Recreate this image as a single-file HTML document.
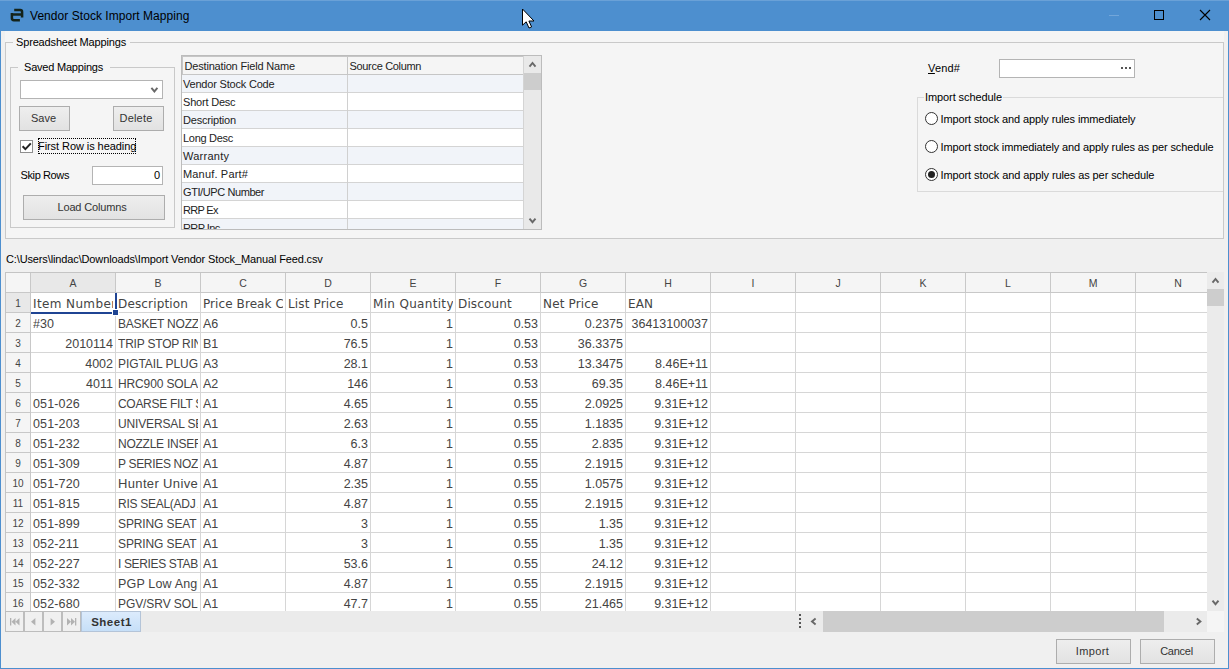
<!DOCTYPE html>
<html lang="en"><head><meta charset="utf-8"><title>Vendor Stock Import Mapping</title>
<style>
*{box-sizing:border-box;margin:0;padding:0}
html,body{width:1229px;height:669px;overflow:hidden;background:#f0f0f0}
body{font-family:"Liberation Sans","DejaVu Sans",sans-serif;font-size:11px;color:#000}
#win{position:absolute;left:0;top:0;width:1229px;height:669px;background:#f0f0f0;overflow:hidden}
#win>div,#win>span,#win>svg{position:absolute}
.abs{position:absolute}
/* title bar */
#title{left:0;top:0;width:1229px;height:31px;background:#4d8fcf}
#title .hl{position:absolute;left:0;top:0;width:1229px;height:1px;background:#6aa1d7}
#ttext{position:absolute;left:30px;top:9px;font-size:12px;line-height:15px;white-space:nowrap;color:#000}
#bl{left:0;top:31px;width:1px;height:638px;background:#4d8fcf}
#br{left:1228px;top:31px;width:1px;height:638px;background:#4d8fcf}
#bb{left:0;top:668px;width:1229px;height:1px;background:#4d8fcf}
/* panel */
#panel{left:5px;top:31px;width:1219px;height:208px;background:#f5f5f5}
.gb{border:1px solid #c9c9c9}
.gbl{background:#f5f5f5;white-space:nowrap;line-height:13px;font-size:11px}
.t{white-space:nowrap;line-height:13px;font-size:11px}
.btn{border:1px solid #adadad;background:#e6e6e6;background:linear-gradient(#eeeeee,#e2e2e2);text-align:center;font-size:11px;color:#333;white-space:nowrap}
.inp{border:1px solid #b4b4b4;background:#fff}
/* mapping table */
#map{left:181px;top:55px;width:361px;height:175px;border:1px solid #bcbcbc;background:#fff;overflow:hidden}
#map div{position:absolute}
#map .hd{background:#f5f5f5;border:1px solid #c6c6c6;height:19px;top:0;line-height:18px;padding-left:1.5px;white-space:nowrap;color:#222}
#map .rw{left:0;width:341px;height:18px;border-bottom:1px solid #d4d4d4}
#map .rw.a{background:#f1f4f9}
#map .rw span{position:absolute;left:1px;top:1px;line-height:17px;white-space:nowrap;color:#222;letter-spacing:-0.2px}
#map .vl{left:165px;top:19px;width:1px;height:160px;background:#d0d0d0}
#map .sb{left:341px;top:0;width:18px;height:173px;background:#e9e9e9;border-left:1px solid #d4d4d4}
#map .th{left:342px;top:17px;width:17px;height:17px;background:#cdcdcd}
/* sheet */
#sheet{left:5px;top:272px;width:1202px;height:339px;border-left:1px solid #c4c4c4;border-top:1px solid #c4c4c4;background:#fff;overflow:hidden}
#sheet div{position:absolute}
#sheet .corner{left:0;top:0;width:25px;height:20px;background:#f5f5f5;border-right:1px solid #c8c8c8;border-bottom:1px solid #c8c8c8}
#sheet .ch{top:0;width:85px;height:20px;background:#f5f5f5;border-right:1px solid #c8c8c8;border-bottom:1px solid #c8c8c8;text-align:center;font-size:10.5px;line-height:20px;color:#444;padding-top:0}
#sheet .rh{left:0;width:25px;height:20px;background:#f5f5f5;border-right:1px solid #c8c8c8;border-bottom:1px solid #c8c8c8;text-align:center;font-size:10px;line-height:20px;color:#444;padding-top:1px}
#sheet .sel{background:#e8e8e8}
#sheet .c{width:85px;height:20px;border-right:1px solid #d6d6d6;border-bottom:1px solid #d6d6d6;font-size:12.5px;color:#444;line-height:19px;white-space:nowrap;overflow:hidden}
#sheet .c span{position:absolute;left:2px;top:2px;width:80px;height:19px;overflow:hidden;display:block;white-space:nowrap}
#sheet .c.r span{text-align:right;direction:ltr}
#sheet .c.hd span{font-family:"DejaVu Sans","Liberation Sans",sans-serif;font-size:12px;letter-spacing:0.15px;top:2px}
#sheet .selr{left:109px;top:20px;width:2px;height:16px;background:#1f4493}
#sheet .selb{left:25px;top:39px;width:82px;height:2px;background:#1f4493}
#sheet .selh{left:107px;top:37px;width:5px;height:5px;background:#1f4493;box-shadow:0 0 0 1px #fff}
/* v scrollbar */
#vsb{left:1207px;top:272px;width:17px;height:339px;background:#ebebeb}
#vth{left:1207px;top:289px;width:17px;height:17px;background:#cdcdcd}
/* tab bar */
#tabbar{left:5px;top:611px;width:1202px;height:21px;background:#ebebeb}
.nav{top:611px;width:19px;height:21px;border:1px solid #bdbdbd;background:#f0f0f0}
#tab{left:81px;top:611px;width:60px;height:21px;border:1px solid #b4c4d8;background:linear-gradient(#dcebfc,#c6dff8);text-align:center;font-weight:bold;font-size:11.5px;letter-spacing:0.5px;line-height:21px;color:#333;padding-left:1px}
#hth{left:823px;top:611px;width:341px;height:21px;background:#cdcdcd}
#corner{left:1207px;top:611px;width:17px;height:21px;background:#f5f5f5}

</style></head>
<body>
<div id="win">
<div id="title"><div class="hl"></div>
<svg class="abs" style="left:10px;top:8px" width="16" height="16" viewBox="0 0 16 16"><path d="M4.2 1.9 H10.2 Q12.1 1.9 12.1 3.9 V9.5 M0.7 6.4 H12.1 M1.9 5 V10.3 Q1.9 12.2 3.9 12.2 H9.9" fill="none" stroke="#14231a" stroke-width="2.5"/></svg>
<span id="ttext" style="letter-spacing:0.05px">Vendor Stock Import Mapping</span>
<svg class="abs" style="left:520px;top:7px" width="16" height="23" viewBox="0 0 16 23"><path d="M2.5 2 V18.2 L6.2 14.8 L9 21 L11.6 19.9 L8.9 14 H14 Z" fill="#fff" stroke="#000" stroke-width="1" stroke-linejoin="miter"/></svg>
<div class="abs" style="left:1109px;top:15px;width:10px;height:1px;background:#72a6da"></div>
<div class="abs" style="left:1154px;top:10px;width:10px;height:10px;border:1px solid #000"></div>
<svg class="abs" style="left:1199px;top:9px" width="12" height="12" viewBox="0 0 12 12"><path d="M1 1 L11 11 M11 1 L1 11" stroke="#000" stroke-width="1.1" fill="none"/></svg>
</div>
<div id="bl"></div><div id="br"></div><div id="bb"></div>
<div id="panel"></div>

<!-- Spreadsheet Mappings group -->
<div class="gb" style="left:5px;top:42px;width:1219px;height:197px"></div>
<span class="gbl" style="left:13px;top:36px;padding:0 4px 0 3px;letter-spacing:-0.155px">Spreadsheet Mappings</span>

<!-- Saved Mappings group -->
<div class="gb" style="left:10px;top:67px;width:165px;height:161px"></div>
<span class="gbl" style="left:18px;top:61px;padding:0 7px 0 6px;letter-spacing:-0.21px">Saved Mappings</span>
<div class="inp" style="left:20px;top:80px;width:143px;height:19px"></div>
<svg style="left:149px;top:85px" width="11" height="9" viewBox="0 0 11 9"><path d="M2.4 2.8 L5.4 6.4 L8.4 2.8" fill="none" stroke="#686868" stroke-width="1.9"/></svg>
<div class="btn" style="left:19px;top:106px;width:51px;height:25px;line-height:22px;letter-spacing:0;padding-right:2px">Save</div>
<div class="btn" style="left:113px;top:106px;width:51px;height:25px;line-height:22px;letter-spacing:0.2px;padding-right:5px">Delete</div>
<div class="inp" style="left:20px;top:140px;width:13px;height:13px;border-color:#8e8e8e"></div>
<svg style="left:21px;top:141px" width="11" height="11" viewBox="0 0 11 11"><path d="M1.6 5.2 L4.4 8.1 L9.8 2.4" fill="none" stroke="#222" stroke-width="2"/></svg>
<div style="left:38px;top:138px;width:98px;height:16px;border:1px dotted #000"></div>
<span class="t" style="left:38px;top:140px;letter-spacing:-0.07px">First Row is heading</span>
<span class="t" style="left:20.5px;top:169px;letter-spacing:-0.38px">Skip Rows</span>
<div class="inp" style="left:92px;top:166px;width:71px;height:19px;text-align:right;padding-right:2px;line-height:17px">0</div>
<div class="btn" style="left:23px;top:195px;width:142px;height:25px;line-height:22px;letter-spacing:-0.16px;padding-right:4px">Load Columns</div>

<!-- mapping table -->
<div id="map">
<div class="hd" style="left:0;width:166px;letter-spacing:-0.18px">Destination Field Name</div>
<div class="hd" style="left:165px;width:177px;letter-spacing:-0.32px">Source Column</div>
<div class="rw a" style="top:19px"><span>Vendor Stock Code</span></div>
<div class="rw" style="top:37px"><span>Short Desc</span></div>
<div class="rw a" style="top:55px"><span>Description</span></div>
<div class="rw" style="top:73px"><span style="letter-spacing:-0.3px">Long Desc</span></div>
<div class="rw a" style="top:91px"><span style="letter-spacing:0.25px">Warranty</span></div>
<div class="rw" style="top:109px"><span style="letter-spacing:0.17px">Manuf. Part#</span></div>
<div class="rw a" style="top:127px"><span style="letter-spacing:-0.41px">GTI/UPC Number</span></div>
<div class="rw" style="top:145px"><span style="letter-spacing:-0.7px">RRP Ex</span></div>
<div class="rw a" style="top:163px"><span style="letter-spacing:-0.6px">RRP Inc</span></div>
<div class="vl"></div>
<div class="sb"></div><div class="th"></div>
<svg class="abs" style="left:345px;top:4px" width="11" height="9" viewBox="0 0 11 9"><path d="M2.5 6.6 L5.5 3 L8.5 6.6" fill="none" stroke="#686868" stroke-width="1.9"/></svg>
<svg class="abs" style="left:345px;top:160px" width="11" height="9" viewBox="0 0 11 9"><path d="M2.5 2.6 L5.5 6.2 L8.5 2.6" fill="none" stroke="#686868" stroke-width="1.9"/></svg>
</div>

<!-- Vend# -->
<span class="t" style="left:928px;top:62px;letter-spacing:0.16px"><u>V</u>end#</span>
<div class="inp" style="left:999px;top:59px;width:136px;height:19px"></div>
<div style="left:1121px;top:67px;width:2px;height:2px;background:#555"></div>
<div style="left:1125px;top:67px;width:2px;height:2px;background:#555"></div>
<div style="left:1129px;top:67px;width:2px;height:2px;background:#555"></div>

<!-- Import schedule -->
<div class="gb" style="left:917px;top:97px;width:320px;height:95px;clip-path:inset(0 14px 0 0);border-color:#dadada"></div>
<span class="gbl" style="left:924px;top:91px;padding:0 1px;letter-spacing:-0.09px">Import schedule</span>
<div style="left:925px;top:112px;width:13px;height:13px;border:1px solid #333;border-radius:50%;background:#fff"></div>
<span class="t" style="left:940.5px;top:113px;letter-spacing:-0.11px">Import stock and apply rules immediately</span>
<div style="left:925px;top:140px;width:13px;height:13px;border:1px solid #333;border-radius:50%;background:#fff"></div>
<span class="t" style="left:940.5px;top:141px;letter-spacing:-0.125px">Import stock immediately and apply rules as per schedule</span>
<div style="left:925px;top:168px;width:13px;height:13px;border:1px solid #333;border-radius:50%;background:#fff"></div>
<div style="left:928px;top:171px;width:7px;height:7px;border-radius:50%;background:#222"></div>
<span class="t" style="left:940.5px;top:169px;letter-spacing:-0.1px">Import stock and apply rules as per schedule</span>

<span class="t" style="left:6px;top:253px;letter-spacing:-0.13px">C:\Users\lindac\Downloads\Import Vendor Stock_Manual Feed.csv</span>
<div id="sheet">
<div class="corner"></div>
<div class="ch sel" style="left:25px">A</div>
<div class="ch" style="left:110px">B</div>
<div class="ch" style="left:195px">C</div>
<div class="ch" style="left:280px">D</div>
<div class="ch" style="left:365px">E</div>
<div class="ch" style="left:450px">F</div>
<div class="ch" style="left:535px">G</div>
<div class="ch" style="left:620px">H</div>
<div class="ch" style="left:705px">I</div>
<div class="ch" style="left:790px">J</div>
<div class="ch" style="left:875px">K</div>
<div class="ch" style="left:960px">L</div>
<div class="ch" style="left:1045px">M</div>
<div class="ch" style="left:1130px">N</div>
<div class="rh sel" style="top:20px">1</div>
<div class="c hd" style="left:25px;top:20px"><span style="letter-spacing:0.38px">Item Number</span></div>
<div class="c hd" style="left:110px;top:20px"><span>Description</span></div>
<div class="c hd" style="left:195px;top:20px"><span style="letter-spacing:0.08px">Price Break Code</span></div>
<div class="c hd" style="left:280px;top:20px"><span>List Price</span></div>
<div class="c hd" style="left:365px;top:20px"><span style="letter-spacing:0.32px">Min Quantity</span></div>
<div class="c hd" style="left:450px;top:20px"><span>Discount</span></div>
<div class="c hd" style="left:535px;top:20px"><span>Net Price</span></div>
<div class="c hd" style="left:620px;top:20px"><span>EAN</span></div>
<div class="c hd" style="left:705px;top:20px"><span></span></div>
<div class="c hd" style="left:790px;top:20px"><span></span></div>
<div class="c hd" style="left:875px;top:20px"><span></span></div>
<div class="c hd" style="left:960px;top:20px"><span></span></div>
<div class="c hd" style="left:1045px;top:20px"><span></span></div>
<div class="c hd" style="left:1130px;top:20px"><span></span></div>
<div class="rh" style="top:40px">2</div>
<div class="c" style="left:25px;top:40px"><span>#30</span></div>
<div class="c" style="left:110px;top:40px"><span style="font-size:12px;letter-spacing:-0.2px">BASKET NOZZLE</span></div>
<div class="c" style="left:195px;top:40px"><span>A6</span></div>
<div class="c r" style="left:280px;top:40px"><span>0.5</span></div>
<div class="c r" style="left:365px;top:40px"><span>1</span></div>
<div class="c r" style="left:450px;top:40px"><span>0.53</span></div>
<div class="c r" style="left:535px;top:40px"><span>0.2375</span></div>
<div class="c r" style="left:620px;top:40px"><span>36413100037</span></div>
<div class="c" style="left:705px;top:40px"><span></span></div>
<div class="c" style="left:790px;top:40px"><span></span></div>
<div class="c" style="left:875px;top:40px"><span></span></div>
<div class="c" style="left:960px;top:40px"><span></span></div>
<div class="c" style="left:1045px;top:40px"><span></span></div>
<div class="c" style="left:1130px;top:40px"><span></span></div>
<div class="rh" style="top:60px">3</div>
<div class="c r" style="left:25px;top:60px"><span>2010114</span></div>
<div class="c" style="left:110px;top:60px"><span style="font-size:12px;letter-spacing:-0.2px">TRIP STOP RING</span></div>
<div class="c" style="left:195px;top:60px"><span>B1</span></div>
<div class="c r" style="left:280px;top:60px"><span>76.5</span></div>
<div class="c r" style="left:365px;top:60px"><span>1</span></div>
<div class="c r" style="left:450px;top:60px"><span>0.53</span></div>
<div class="c r" style="left:535px;top:60px"><span>36.3375</span></div>
<div class="c r" style="left:620px;top:60px"><span></span></div>
<div class="c" style="left:705px;top:60px"><span></span></div>
<div class="c" style="left:790px;top:60px"><span></span></div>
<div class="c" style="left:875px;top:60px"><span></span></div>
<div class="c" style="left:960px;top:60px"><span></span></div>
<div class="c" style="left:1045px;top:60px"><span></span></div>
<div class="c" style="left:1130px;top:60px"><span></span></div>
<div class="rh" style="top:80px">4</div>
<div class="c r" style="left:25px;top:80px"><span>4002</span></div>
<div class="c" style="left:110px;top:80px"><span style="font-size:12px;letter-spacing:-0.06px">PIGTAIL PLUG</span></div>
<div class="c" style="left:195px;top:80px"><span>A3</span></div>
<div class="c r" style="left:280px;top:80px"><span>28.1</span></div>
<div class="c r" style="left:365px;top:80px"><span>1</span></div>
<div class="c r" style="left:450px;top:80px"><span>0.53</span></div>
<div class="c r" style="left:535px;top:80px"><span>13.3475</span></div>
<div class="c r" style="left:620px;top:80px"><span>8.46E+11</span></div>
<div class="c" style="left:705px;top:80px"><span></span></div>
<div class="c" style="left:790px;top:80px"><span></span></div>
<div class="c" style="left:875px;top:80px"><span></span></div>
<div class="c" style="left:960px;top:80px"><span></span></div>
<div class="c" style="left:1045px;top:80px"><span></span></div>
<div class="c" style="left:1130px;top:80px"><span></span></div>
<div class="rh" style="top:100px">5</div>
<div class="c r" style="left:25px;top:100px"><span>4011</span></div>
<div class="c" style="left:110px;top:100px"><span style="font-size:12px;letter-spacing:-0.13px">HRC900 SOLAR</span></div>
<div class="c" style="left:195px;top:100px"><span>A2</span></div>
<div class="c r" style="left:280px;top:100px"><span>146</span></div>
<div class="c r" style="left:365px;top:100px"><span>1</span></div>
<div class="c r" style="left:450px;top:100px"><span>0.53</span></div>
<div class="c r" style="left:535px;top:100px"><span>69.35</span></div>
<div class="c r" style="left:620px;top:100px"><span>8.46E+11</span></div>
<div class="c" style="left:705px;top:100px"><span></span></div>
<div class="c" style="left:790px;top:100px"><span></span></div>
<div class="c" style="left:875px;top:100px"><span></span></div>
<div class="c" style="left:960px;top:100px"><span></span></div>
<div class="c" style="left:1045px;top:100px"><span></span></div>
<div class="c" style="left:1130px;top:100px"><span></span></div>
<div class="rh" style="top:120px">6</div>
<div class="c" style="left:25px;top:120px"><span style="letter-spacing:0.15px">051-026</span></div>
<div class="c" style="left:110px;top:120px"><span style="font-size:12px;letter-spacing:-0.3px">COARSE FILT SCREEN</span></div>
<div class="c" style="left:195px;top:120px"><span>A1</span></div>
<div class="c r" style="left:280px;top:120px"><span>4.65</span></div>
<div class="c r" style="left:365px;top:120px"><span>1</span></div>
<div class="c r" style="left:450px;top:120px"><span>0.55</span></div>
<div class="c r" style="left:535px;top:120px"><span>2.0925</span></div>
<div class="c r" style="left:620px;top:120px"><span>9.31E+12</span></div>
<div class="c" style="left:705px;top:120px"><span></span></div>
<div class="c" style="left:790px;top:120px"><span></span></div>
<div class="c" style="left:875px;top:120px"><span></span></div>
<div class="c" style="left:960px;top:120px"><span></span></div>
<div class="c" style="left:1045px;top:120px"><span></span></div>
<div class="c" style="left:1130px;top:120px"><span></span></div>
<div class="rh" style="top:140px">7</div>
<div class="c" style="left:25px;top:140px"><span style="letter-spacing:0.15px">051-203</span></div>
<div class="c" style="left:110px;top:140px"><span style="font-size:12px;letter-spacing:-0.14px">UNIVERSAL SEAL</span></div>
<div class="c" style="left:195px;top:140px"><span>A1</span></div>
<div class="c r" style="left:280px;top:140px"><span>2.63</span></div>
<div class="c r" style="left:365px;top:140px"><span>1</span></div>
<div class="c r" style="left:450px;top:140px"><span>0.55</span></div>
<div class="c r" style="left:535px;top:140px"><span>1.1835</span></div>
<div class="c r" style="left:620px;top:140px"><span>9.31E+12</span></div>
<div class="c" style="left:705px;top:140px"><span></span></div>
<div class="c" style="left:790px;top:140px"><span></span></div>
<div class="c" style="left:875px;top:140px"><span></span></div>
<div class="c" style="left:960px;top:140px"><span></span></div>
<div class="c" style="left:1045px;top:140px"><span></span></div>
<div class="c" style="left:1130px;top:140px"><span></span></div>
<div class="rh" style="top:160px">8</div>
<div class="c" style="left:25px;top:160px"><span style="letter-spacing:0.15px">051-232</span></div>
<div class="c" style="left:110px;top:160px"><span style="font-size:12px;letter-spacing:-0.25px">NOZZLE INSERT</span></div>
<div class="c" style="left:195px;top:160px"><span>A1</span></div>
<div class="c r" style="left:280px;top:160px"><span>6.3</span></div>
<div class="c r" style="left:365px;top:160px"><span>1</span></div>
<div class="c r" style="left:450px;top:160px"><span>0.55</span></div>
<div class="c r" style="left:535px;top:160px"><span>2.835</span></div>
<div class="c r" style="left:620px;top:160px"><span>9.31E+12</span></div>
<div class="c" style="left:705px;top:160px"><span></span></div>
<div class="c" style="left:790px;top:160px"><span></span></div>
<div class="c" style="left:875px;top:160px"><span></span></div>
<div class="c" style="left:960px;top:160px"><span></span></div>
<div class="c" style="left:1045px;top:160px"><span></span></div>
<div class="c" style="left:1130px;top:160px"><span></span></div>
<div class="rh" style="top:180px">9</div>
<div class="c" style="left:25px;top:180px"><span style="letter-spacing:0.15px">051-309</span></div>
<div class="c" style="left:110px;top:180px"><span style="font-size:12px;letter-spacing:-0.32px">P SERIES NOZZLE</span></div>
<div class="c" style="left:195px;top:180px"><span>A1</span></div>
<div class="c r" style="left:280px;top:180px"><span>4.87</span></div>
<div class="c r" style="left:365px;top:180px"><span>1</span></div>
<div class="c r" style="left:450px;top:180px"><span>0.55</span></div>
<div class="c r" style="left:535px;top:180px"><span>2.1915</span></div>
<div class="c r" style="left:620px;top:180px"><span>9.31E+12</span></div>
<div class="c" style="left:705px;top:180px"><span></span></div>
<div class="c" style="left:790px;top:180px"><span></span></div>
<div class="c" style="left:875px;top:180px"><span></span></div>
<div class="c" style="left:960px;top:180px"><span></span></div>
<div class="c" style="left:1045px;top:180px"><span></span></div>
<div class="c" style="left:1130px;top:180px"><span></span></div>
<div class="rh" style="top:200px">10</div>
<div class="c" style="left:25px;top:200px"><span style="letter-spacing:0.15px">051-720</span></div>
<div class="c" style="left:110px;top:200px"><span style="font-size:13px;letter-spacing:0.35px;top:1px">Hunter Universal</span></div>
<div class="c" style="left:195px;top:200px"><span>A1</span></div>
<div class="c r" style="left:280px;top:200px"><span>2.35</span></div>
<div class="c r" style="left:365px;top:200px"><span>1</span></div>
<div class="c r" style="left:450px;top:200px"><span>0.55</span></div>
<div class="c r" style="left:535px;top:200px"><span>1.0575</span></div>
<div class="c r" style="left:620px;top:200px"><span>9.31E+12</span></div>
<div class="c" style="left:705px;top:200px"><span></span></div>
<div class="c" style="left:790px;top:200px"><span></span></div>
<div class="c" style="left:875px;top:200px"><span></span></div>
<div class="c" style="left:960px;top:200px"><span></span></div>
<div class="c" style="left:1045px;top:200px"><span></span></div>
<div class="c" style="left:1130px;top:200px"><span></span></div>
<div class="rh" style="top:220px">11</div>
<div class="c" style="left:25px;top:220px"><span style="letter-spacing:0.15px">051-815</span></div>
<div class="c" style="left:110px;top:220px"><span style="font-size:12px;letter-spacing:-0.27px">RIS SEAL(ADJ ARC)</span></div>
<div class="c" style="left:195px;top:220px"><span>A1</span></div>
<div class="c r" style="left:280px;top:220px"><span>4.87</span></div>
<div class="c r" style="left:365px;top:220px"><span>1</span></div>
<div class="c r" style="left:450px;top:220px"><span>0.55</span></div>
<div class="c r" style="left:535px;top:220px"><span>2.1915</span></div>
<div class="c r" style="left:620px;top:220px"><span>9.31E+12</span></div>
<div class="c" style="left:705px;top:220px"><span></span></div>
<div class="c" style="left:790px;top:220px"><span></span></div>
<div class="c" style="left:875px;top:220px"><span></span></div>
<div class="c" style="left:960px;top:220px"><span></span></div>
<div class="c" style="left:1045px;top:220px"><span></span></div>
<div class="c" style="left:1130px;top:220px"><span></span></div>
<div class="rh" style="top:240px">12</div>
<div class="c" style="left:25px;top:240px"><span style="letter-spacing:0.15px">051-899</span></div>
<div class="c" style="left:110px;top:240px"><span style="font-size:12px;letter-spacing:-0.12px">SPRING SEAT</span></div>
<div class="c" style="left:195px;top:240px"><span>A1</span></div>
<div class="c r" style="left:280px;top:240px"><span>3</span></div>
<div class="c r" style="left:365px;top:240px"><span>1</span></div>
<div class="c r" style="left:450px;top:240px"><span>0.55</span></div>
<div class="c r" style="left:535px;top:240px"><span>1.35</span></div>
<div class="c r" style="left:620px;top:240px"><span>9.31E+12</span></div>
<div class="c" style="left:705px;top:240px"><span></span></div>
<div class="c" style="left:790px;top:240px"><span></span></div>
<div class="c" style="left:875px;top:240px"><span></span></div>
<div class="c" style="left:960px;top:240px"><span></span></div>
<div class="c" style="left:1045px;top:240px"><span></span></div>
<div class="c" style="left:1130px;top:240px"><span></span></div>
<div class="rh" style="top:260px">13</div>
<div class="c" style="left:25px;top:260px"><span style="letter-spacing:0.15px">052-211</span></div>
<div class="c" style="left:110px;top:260px"><span style="font-size:12px;letter-spacing:-0.12px">SPRING SEAT</span></div>
<div class="c" style="left:195px;top:260px"><span>A1</span></div>
<div class="c r" style="left:280px;top:260px"><span>3</span></div>
<div class="c r" style="left:365px;top:260px"><span>1</span></div>
<div class="c r" style="left:450px;top:260px"><span>0.55</span></div>
<div class="c r" style="left:535px;top:260px"><span>1.35</span></div>
<div class="c r" style="left:620px;top:260px"><span>9.31E+12</span></div>
<div class="c" style="left:705px;top:260px"><span></span></div>
<div class="c" style="left:790px;top:260px"><span></span></div>
<div class="c" style="left:875px;top:260px"><span></span></div>
<div class="c" style="left:960px;top:260px"><span></span></div>
<div class="c" style="left:1045px;top:260px"><span></span></div>
<div class="c" style="left:1130px;top:260px"><span></span></div>
<div class="rh" style="top:280px">14</div>
<div class="c" style="left:25px;top:280px"><span style="letter-spacing:0.15px">052-227</span></div>
<div class="c" style="left:110px;top:280px"><span style="font-size:12px;letter-spacing:-0.35px">I SERIES STABILISER</span></div>
<div class="c" style="left:195px;top:280px"><span>A1</span></div>
<div class="c r" style="left:280px;top:280px"><span>53.6</span></div>
<div class="c r" style="left:365px;top:280px"><span>1</span></div>
<div class="c r" style="left:450px;top:280px"><span>0.55</span></div>
<div class="c r" style="left:535px;top:280px"><span>24.12</span></div>
<div class="c r" style="left:620px;top:280px"><span>9.31E+12</span></div>
<div class="c" style="left:705px;top:280px"><span></span></div>
<div class="c" style="left:790px;top:280px"><span></span></div>
<div class="c" style="left:875px;top:280px"><span></span></div>
<div class="c" style="left:960px;top:280px"><span></span></div>
<div class="c" style="left:1045px;top:280px"><span></span></div>
<div class="c" style="left:1130px;top:280px"><span></span></div>
<div class="rh" style="top:300px">15</div>
<div class="c" style="left:25px;top:300px"><span style="letter-spacing:0.15px">052-332</span></div>
<div class="c" style="left:110px;top:300px"><span style="font-size:12.5px;letter-spacing:0.17px">PGP Low Angle</span></div>
<div class="c" style="left:195px;top:300px"><span>A1</span></div>
<div class="c r" style="left:280px;top:300px"><span>4.87</span></div>
<div class="c r" style="left:365px;top:300px"><span>1</span></div>
<div class="c r" style="left:450px;top:300px"><span>0.55</span></div>
<div class="c r" style="left:535px;top:300px"><span>2.1915</span></div>
<div class="c r" style="left:620px;top:300px"><span>9.31E+12</span></div>
<div class="c" style="left:705px;top:300px"><span></span></div>
<div class="c" style="left:790px;top:300px"><span></span></div>
<div class="c" style="left:875px;top:300px"><span></span></div>
<div class="c" style="left:960px;top:300px"><span></span></div>
<div class="c" style="left:1045px;top:300px"><span></span></div>
<div class="c" style="left:1130px;top:300px"><span></span></div>
<div class="rh" style="top:320px">16</div>
<div class="c" style="left:25px;top:320px"><span style="letter-spacing:0.15px">052-680</span></div>
<div class="c" style="left:110px;top:320px"><span style="font-size:12px;letter-spacing:-0.08px">PGV/SRV SOLENOID</span></div>
<div class="c" style="left:195px;top:320px"><span>A1</span></div>
<div class="c r" style="left:280px;top:320px"><span>47.7</span></div>
<div class="c r" style="left:365px;top:320px"><span>1</span></div>
<div class="c r" style="left:450px;top:320px"><span>0.55</span></div>
<div class="c r" style="left:535px;top:320px"><span>21.465</span></div>
<div class="c r" style="left:620px;top:320px"><span>9.31E+12</span></div>
<div class="c" style="left:705px;top:320px"><span></span></div>
<div class="c" style="left:790px;top:320px"><span></span></div>
<div class="c" style="left:875px;top:320px"><span></span></div>
<div class="c" style="left:960px;top:320px"><span></span></div>
<div class="c" style="left:1045px;top:320px"><span></span></div>
<div class="c" style="left:1130px;top:320px"><span></span></div>
<div class="selr"></div><div class="selb"></div><div class="selh"></div>
</div>
<div id="vsb"></div><div id="vth"></div>
<svg style="left:1210px;top:276px" width="11" height="9" viewBox="0 0 11 9"><path d="M2.5 6.6 L5.5 3 L8.5 6.6" fill="none" stroke="#686868" stroke-width="1.9"/></svg>
<svg style="left:1210px;top:598px" width="11" height="9" viewBox="0 0 11 9"><path d="M2.5 2.6 L5.5 6.2 L8.5 2.6" fill="none" stroke="#686868" stroke-width="1.9"/></svg>
<div id="tabbar"></div>
<div class="nav" style="left:5px"></div><div class="nav" style="left:24px"></div><div class="nav" style="left:43px"></div><div class="nav" style="left:62px"></div>
<svg style="left:5px;top:611px" width="77" height="21" viewBox="0 0 77 21"><g fill="#b2b2b2"><rect x="5" y="7" width="1.3" height="7.5"/><path d="M10.5 7 V14.5 L6.5 10.75 Z M14.5 7 V14.5 L10.5 10.75 Z"/><path d="M30.4 7 V14.5 L26 10.75 Z"/><path d="M45.6 7 V14.5 L50 10.75 Z"/><path d="M62 7 V14.5 L66 10.75 Z M66 7 V14.5 L70 10.75 Z"/><rect x="70" y="7" width="1.3" height="7.5"/></g></svg>
<div id="tab">Sheet1</div>
<div style="left:799px;top:614px;width:2px;height:2px;background:#555"></div>
<div style="left:799px;top:618px;width:2px;height:2px;background:#555"></div>
<div style="left:799px;top:622px;width:2px;height:2px;background:#555"></div>
<div style="left:799px;top:626px;width:2px;height:2px;background:#555"></div>
<svg style="left:809px;top:616px" width="9" height="11" viewBox="0 0 9 11"><path d="M6.6 2.5 L3 5.5 L6.6 8.5" fill="none" stroke="#686868" stroke-width="1.9"/></svg>
<div id="hth"></div>
<svg style="left:1194px;top:616px" width="9" height="11" viewBox="0 0 9 11"><path d="M2.8 2.5 L6.4 5.5 L2.8 8.5" fill="none" stroke="#686868" stroke-width="1.9"/></svg>
<div id="corner"></div>
<div class="btn" style="left:1056px;top:639px;width:75px;height:25px;line-height:22px;letter-spacing:0.38px;padding-right:2px">Import</div>
<div class="btn" style="left:1140px;top:639px;width:75px;height:25px;line-height:22px;letter-spacing:-0.25px;padding-right:2px">Cancel</div>
</div>
</body></html>
